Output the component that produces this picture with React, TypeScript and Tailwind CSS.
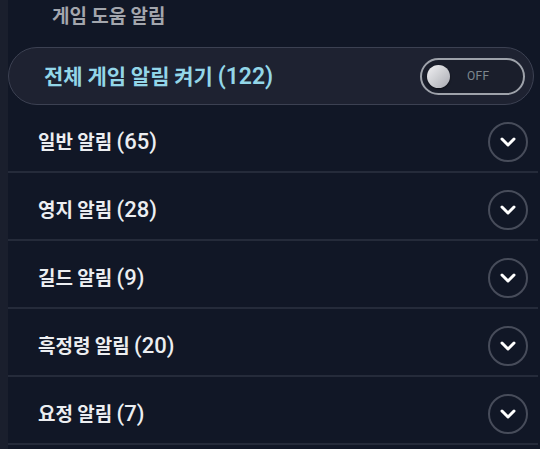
import React from 'react';

const groups = [
  { name: '일반 알림', count: 65 },
  { name: '영지 알림', count: 28 },
  { name: '길드 알림', count: 9 },
  { name: '흑정령 알림', count: 20 },
  { name: '요정 알림', count: 7 },
];

const latin = { fontFamily: 'Roboto, "Noto Sans", sans-serif' };

function ChevronButton() {
  return (
    <div className="flex h-[40px] w-[40px] items-center justify-center rounded-full border-2 border-[#474c5a]">
      <svg width="16" height="10" viewBox="0 0 16 10" fill="none">
        <path d="M2 2 L8 8 L14 2" stroke="#ffffff" strokeWidth="3" strokeLinecap="round" strokeLinejoin="round" />
      </svg>
    </div>
  );
}

function Toggle() {
  return (
    <div className="flex h-[37px] w-[105px] items-center rounded-full border-[2.5px] border-[#9ea2aa] bg-[#1a1e2b] pl-[5px]">
      <div className="h-[23px] w-[23px] rounded-full bg-gradient-to-br from-[#f2f2f4] to-[#a9abb2] shadow-[0_1px_2px_rgba(0,0,0,0.6)]" />
      <span className="ml-[17px] text-[12px] tracking-wide text-[#7d878e]" style={latin}>
        OFF
      </span>
    </div>
  );
}

export default function App() {
  return (
    <div
      className="flex h-[449px] w-[540px] overflow-hidden bg-[#111726]"
      style={{ fontFamily: '"Noto Sans CJK KR", "Noto Sans", sans-serif' }}
    >
      <div className="w-[8px] shrink-0 bg-[#1a1f2d]" />
      <div className="flex flex-1 flex-col">
        {/* Header */}
        <div className="flex h-[47px] items-start pl-[44px] pt-[2px]">
          <span className="text-[19px] font-semibold leading-[26px] text-[#a3a6ad]">게임 도움 알림</span>
        </div>

        {/* Master switch */}
        <div className="mr-[6px] flex h-[58px] items-center justify-between rounded-full border-[1.5px] border-[#3c4152] bg-[#1e2231] pl-[35px] pr-[8px]">
          <span className="text-[21px] font-bold leading-none text-[#93d6e8]">
            전체 게임 알림 켜기{' '}
            <span className="text-[23px] font-semibold" style={latin}>
              (122)
            </span>
          </span>
          <Toggle />
        </div>

        {/* Groups */}
        <div className="flex flex-col">
          {groups.map((g) => (
            <div key={g.name} className="flex flex-col">
              <div className="flex h-[66px] items-center justify-between pl-[30px] pr-[12px] pt-[8px]">
                <span className="text-[19px] font-semibold leading-none text-[#eceef1]">
                  {g.name}{' '}
                  <span className="text-[22px] font-medium" style={latin}>
                    ({g.count})
                  </span>
                </span>
                <ChevronButton />
              </div>
              <div className="mr-[2px] h-[2px] bg-[#252b3a]" />
            </div>
          ))}
        </div>
      </div>
    </div>
  );
}
